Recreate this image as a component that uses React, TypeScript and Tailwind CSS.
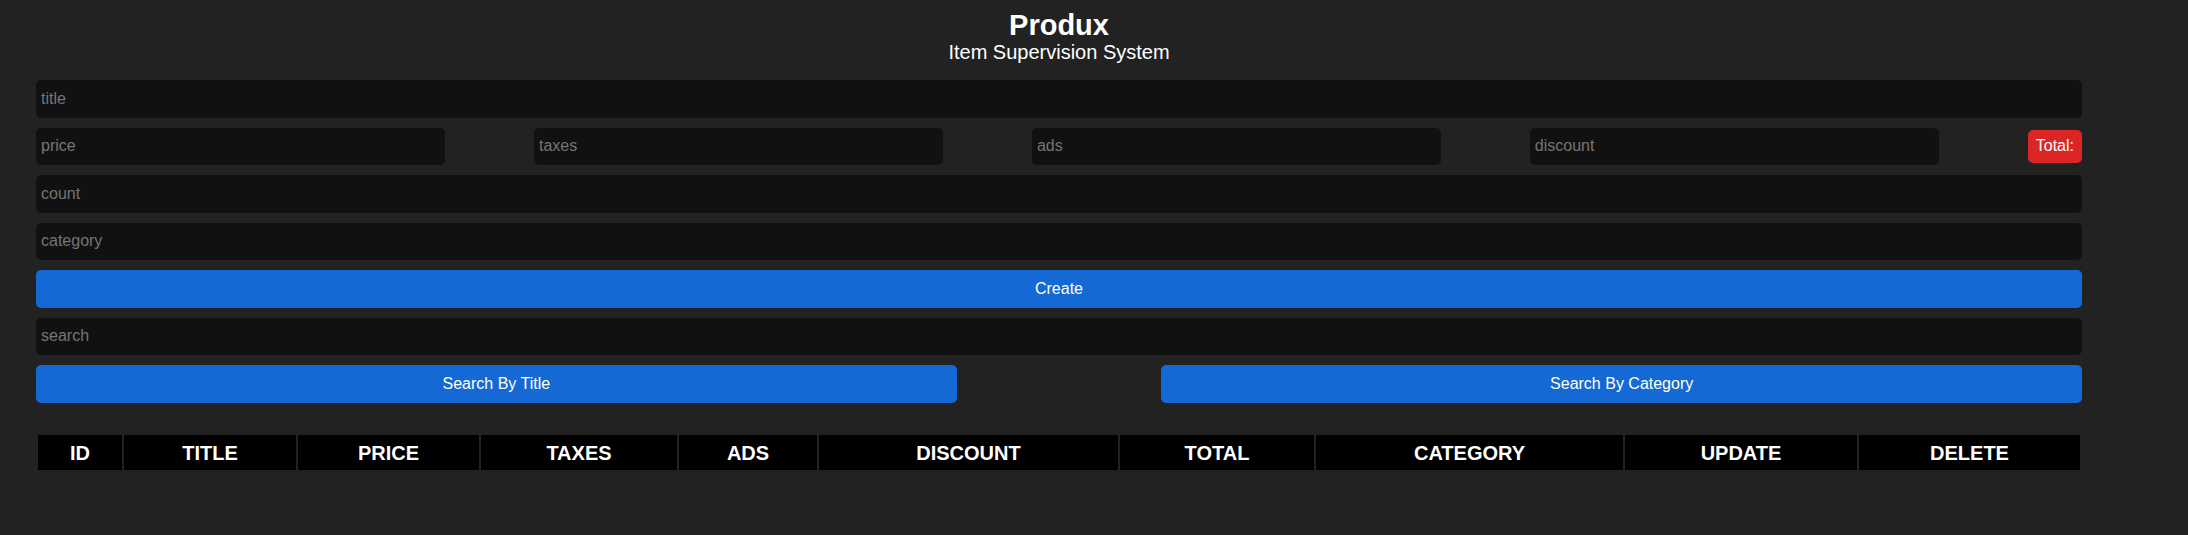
import React from "react";

const inputCls =
  "h-[37.5px] rounded-[5px] bg-[#111111] px-[5px] text-[16px] text-white outline-none placeholder:text-[#757575] border-0";

const headers = [
  "ID",
  "TITLE",
  "PRICE",
  "TAXES",
  "ADS",
  "DISCOUNT",
  "TOTAL",
  "CATEGORY",
  "UPDATE",
  "DELETE",
];

export default function App() {
  return (
    <div className="min-h-screen bg-[#222222] font-['Liberation_Sans',Arial,sans-serif] text-white">
      <div className="ml-[36px] w-[2046px] pt-[9px]">
        <div className="text-center">
          <div className="text-[29px] leading-[32px] font-bold">Produx</div>
          <div className="text-[20px] leading-[23px]">Item Supervision System</div>
        </div>

        <div className="mt-[16px] flex flex-col gap-[10px]">
          <input className={`${inputCls} w-full`} placeholder="title" />
          <div className="flex items-center justify-between">
            <input className={`${inputCls} w-[20%]`} placeholder="price" />
            <input className={`${inputCls} w-[20%]`} placeholder="taxes" />
            <input className={`${inputCls} w-[20%]`} placeholder="ads" />
            <input className={`${inputCls} w-[20%]`} placeholder="discount" />
            <div className="flex h-[32.7px] items-center rounded-[5px] bg-[#dc2626] px-[8px] text-[16px] text-white">
              Total:
            </div>
          </div>
          <input className={`${inputCls} w-full`} placeholder="count" />
          <input className={`${inputCls} w-full`} placeholder="category" />
          <button className="h-[37.5px] w-full rounded-[5px] bg-[#1469d4] text-[16px] text-white">
            Create
          </button>
          <input className={`${inputCls} w-full`} placeholder="search" />
          <div className="flex justify-between">
            <button className="h-[37.5px] w-[45%] rounded-[5px] bg-[#1469d4] text-[16px] text-white">
              Search By Title
            </button>
            <button className="h-[37.5px] w-[45%] rounded-[5px] bg-[#1469d4] text-[16px] text-white">
              Search By Category
            </button>
          </div>
        </div>

        <div className="mx-[2px] mt-[32.5px] grid grid-cols-[84px_172px_181px_196px_138px_299px_194px_307px_232px_221px] gap-x-[2px]">
          {headers.map((h) => (
            <div
              key={h}
              className="flex h-[35px] items-center justify-center bg-black text-[20px] font-bold text-white"
            >
              {h}
            </div>
          ))}
        </div>
      </div>
    </div>
  );
}
